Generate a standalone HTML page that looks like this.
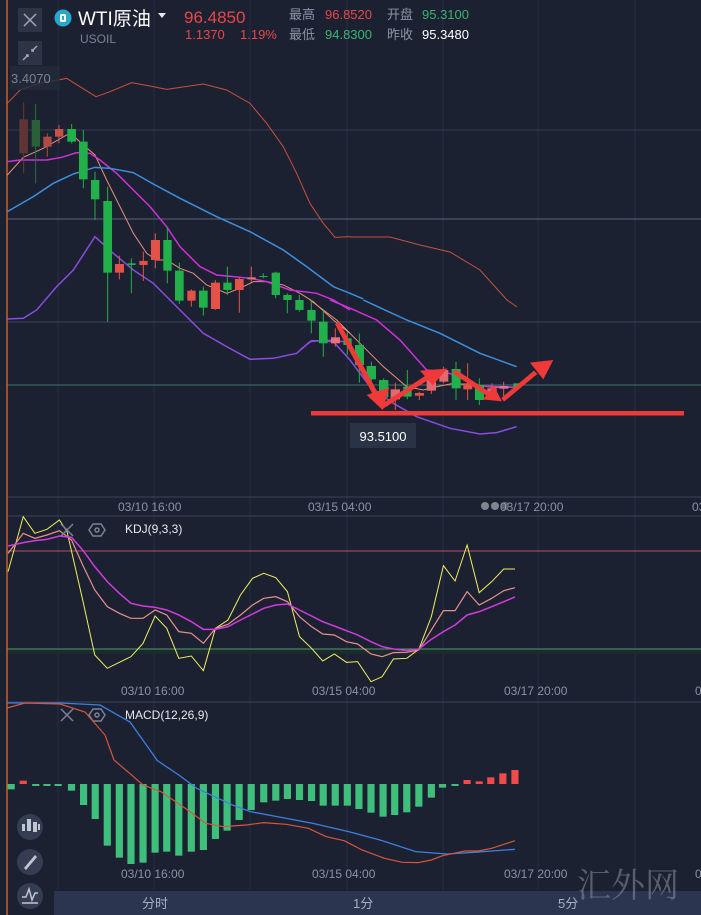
<!DOCTYPE html>
<html><head><meta charset="utf-8"><style>
html,body{margin:0;padding:0;background:#1b2131;}
body{width:701px;height:915px;overflow:hidden;position:relative;font-family:"Liberation Sans","Noto Sans CJK SC",sans-serif;}
svg{position:absolute;left:0;top:0}
.ns{vector-effect:non-scaling-stroke;fill:none}
</style></head><body>
<svg width="701" height="915" viewBox="0 0 701 915" xmlns="http://www.w3.org/2000/svg">
<rect width="701" height="915" fill="#1b2131"/>
<g stroke="#283046" stroke-width="1">
<line x1="58" y1="0" x2="58" y2="890"/><line x1="154" y1="0" x2="154" y2="890"/><line x1="250" y1="0" x2="250" y2="890"/><line x1="347" y1="0" x2="347" y2="890"/><line x1="443" y1="0" x2="443" y2="890"/><line x1="538" y1="0" x2="538" y2="890"/><line x1="635" y1="0" x2="635" y2="890"/>
</g>
<line x1="7" y1="130" x2="701" y2="130" stroke="#323a50"/>
<line x1="7" y1="219" x2="701" y2="219" stroke="#5a6278"/>
<line x1="7" y1="322" x2="701" y2="322" stroke="#3a4258"/>
<line x1="7" y1="385" x2="701" y2="385" stroke="#3f7468"/>
<line x1="7" y1="497" x2="701" y2="497" stroke="#3a4258"/>
<line x1="7" y1="516" x2="701" y2="516" stroke="#3a4258"/>
<line x1="7" y1="551" x2="701" y2="551" stroke="#b8506a"/>
<rect x="7" y="649" width="694" height="5" fill="#1c2a2c"/>
<line x1="7" y1="649" x2="701" y2="649" stroke="#4f9a6a"/>
<line x1="7" y1="702" x2="701" y2="702" stroke="#3a4258"/>
<line x1="7" y1="0" x2="7" y2="915" stroke="#c8602a" stroke-width="1.5"/>

<g transform="translate(0,80) scale(0.3333)">
<polyline class="ns" stroke="#c8503c" stroke-width="1" points="22,70 60,30 110,12 200,-5 240,20 288,50 330,35 395,8 450,18 500,28 610,12 680,30 750,70 800,130 850,200 890,280 930,370 970,430 1005,472 1050,470"/>
<polyline class="ns" stroke="#e8907a" stroke-width="1" points="22,285 70,232 130,205 200,165 215,163 250,195 285,225 320,300 360,380 400,460 440,520 470,540 500,540 540,565 580,580 620,615 680,640 720,625 760,605 800,605 850,615 900,640 940,665 1000,720 1050,760"/>
<polyline class="ns" stroke="#d030d8" stroke-width="1.5" points="22,245 60,240 140,240 185,232 230,218 270,220 300,240 350,280 400,330 450,380 500,440 540,500 600,560 650,585 700,590 750,595 800,605 870,630 950,640 1000,660 1050,690"/>
<polyline class="ns" stroke="#3d8fe0" stroke-width="1.5" points="22,395 100,350 160,310 220,282 285,262 330,265 400,278 460,312 540,355 650,410 750,455 850,510 920,560 1000,620 1050,640 1090,657"/>
<polyline class="ns" stroke="#8a4ce0" stroke-width="1.5" points="22,717 70,715 110,690 170,620 220,570 285,470 340,520 400,570 460,610 540,690 610,760 680,800 750,838 820,835 890,820 930,785 975,780 1030,785"/>
</g>
<polyline fill="none" stroke="#c8503c" points="350,237 390,237 420,245 450,252 480,270 507,300 517,307"/>
<g transform="translate(300,300) scale(0.3333)">
<polyline class="ns" stroke="#e8907a" stroke-width="1" points="30,0 110,60 180,130 250,200 320,260 370,270 420,258 460,250 520,255 580,262 650,262"/>
<polyline class="ns" stroke="#d030d8" stroke-width="1.5" points="90,0 140,20 230,60 300,120 380,210 430,215 480,230 540,258 600,260 650,262"/>
<polyline class="ns" stroke="#3d8fe0" stroke-width="1.5" points="190,0 320,60 420,100 540,160 650,200"/>
<polyline class="ns" stroke="#8a4ce0" stroke-width="1.5" points="0,150 35,122 100,125 150,180 210,260 280,310 350,350 450,385 540,402 590,398 650,380"/>
</g>

<g transform="translate(0,80) scale(0.3333)">
<line class="ns" x1="71" y1="68" x2="71" y2="280" stroke="#6b3a3a"/><rect x="58" y="118" width="26" height="102" fill="#5e3434"/>
<line class="ns" x1="107" y1="72" x2="107" y2="310" stroke="#2e6b3e"/><rect x="95" y="120" width="25" height="80" fill="#2a6038"/>
<line class="ns" x1="142" y1="160" x2="142" y2="230" stroke="#b04a44"/><rect x="130" y="170" width="25" height="30" fill="#b04a44"/>
<line class="ns" x1="177" y1="135" x2="177" y2="190" stroke="#c8504a"/><rect x="165" y="147" width="25" height="23" fill="#c8504a"/>
<line class="ns" x1="215" y1="132" x2="215" y2="190" stroke="#22b04a"/><rect x="202" y="147" width="26" height="38" fill="#22b04a"/>
<line class="ns" x1="250" y1="150" x2="250" y2="325" stroke="#22b04a"/><rect x="237" y="185" width="26" height="113" fill="#22b04a"/>
<line class="ns" x1="285" y1="275" x2="285" y2="420" stroke="#22b04a"/><rect x="273" y="300" width="25" height="58" fill="#22b04a"/>
<line class="ns" x1="323" y1="320" x2="323" y2="725" stroke="#22b04a"/><rect x="310" y="363" width="26" height="215" fill="#22b04a"/>
<line class="ns" x1="358" y1="527" x2="358" y2="598" stroke="#e4534a"/><rect x="345" y="552" width="27" height="26" fill="#e4534a"/>
<line class="ns" x1="394" y1="535" x2="394" y2="640" stroke="#22b04a"/><rect x="382" y="550" width="25" height="5" fill="#22b04a"/>
<line class="ns" x1="430" y1="515" x2="430" y2="603" stroke="#e4534a"/><rect x="418" y="543" width="25" height="12" fill="#e4534a"/>
<line class="ns" x1="466" y1="460" x2="466" y2="565" stroke="#e4534a"/><rect x="453" y="480" width="27" height="60" fill="#e4534a"/>
<line class="ns" x1="502" y1="440" x2="502" y2="610" stroke="#22b04a"/><rect x="490" y="480" width="25" height="92" fill="#22b04a"/>
<line class="ns" x1="538" y1="548" x2="538" y2="672" stroke="#22b04a"/><rect x="525" y="572" width="26" height="90" fill="#22b04a"/>
<line class="ns" x1="574" y1="628" x2="574" y2="680" stroke="#e4534a"/><rect x="562" y="632" width="25" height="30" fill="#e4534a"/>
<line class="ns" x1="610" y1="620" x2="610" y2="707" stroke="#22b04a"/><rect x="597" y="632" width="26" height="51" fill="#22b04a"/>
<line class="ns" x1="646" y1="600" x2="646" y2="690" stroke="#e4534a"/><rect x="633" y="608" width="27" height="79" fill="#e4534a"/>
<line class="ns" x1="682" y1="560" x2="682" y2="645" stroke="#22b04a"/><rect x="670" y="608" width="25" height="22" fill="#22b04a"/>
<line class="ns" x1="718" y1="590" x2="718" y2="698" stroke="#e4534a"/><rect x="705" y="597" width="26" height="33" fill="#e4534a"/>
<line class="ns" x1="754" y1="560" x2="754" y2="605" stroke="#e4534a"/><rect x="742" y="592" width="25" height="6" fill="#e87080"/>
<line class="ns" x1="790" y1="580" x2="790" y2="595" stroke="#22b04a"/><rect x="778" y="588" width="25" height="3" fill="#22b04a"/>
<line class="ns" x1="827" y1="575" x2="827" y2="655" stroke="#22b04a"/><rect x="815" y="578" width="25" height="67" fill="#22b04a"/>
<line class="ns" x1="862" y1="640" x2="862" y2="700" stroke="#22b04a"/><rect x="850" y="645" width="25" height="15" fill="#22b04a"/>
<line class="ns" x1="898" y1="645" x2="898" y2="695" stroke="#22b04a"/><rect x="886" y="660" width="25" height="30" fill="#22b04a"/>
<line class="ns" x1="934" y1="660" x2="934" y2="760" stroke="#22b04a"/><rect x="922" y="690" width="25" height="32" fill="#22b04a"/>
<line class="ns" x1="970" y1="690" x2="970" y2="830" stroke="#22b04a"/><rect x="957" y="725" width="26" height="65" fill="#22b04a"/>
<line class="ns" x1="1006" y1="745" x2="1006" y2="800" stroke="#e4534a"/><rect x="993" y="772" width="27" height="18" fill="#e87080"/>
</g>
<g transform="translate(300,300) scale(0.3333)">
<line class="ns" x1="142" y1="95" x2="142" y2="165" stroke="#22b04a"/><rect x="130" y="115" width="25" height="20" fill="#22b04a"/>
<line class="ns" x1="178" y1="100" x2="178" y2="248" stroke="#22b04a"/><rect x="165" y="135" width="27" height="60" fill="#22b04a"/>
<line class="ns" x1="214" y1="185" x2="214" y2="250" stroke="#22b04a"/><rect x="200" y="198" width="28" height="40" fill="#22b04a"/>
<line class="ns" x1="251" y1="235" x2="251" y2="325" stroke="#22b04a"/><rect x="237" y="240" width="28" height="52" fill="#22b04a"/>
<line class="ns" x1="286" y1="248" x2="286" y2="330" stroke="#e4534a"/><rect x="272" y="268" width="28" height="30" fill="#e06a70"/>
<line class="ns" x1="322" y1="210" x2="322" y2="298" stroke="#22b04a"/><rect x="310" y="260" width="25" height="30" fill="#22b04a"/>
<line class="ns" x1="358" y1="275" x2="358" y2="300" stroke="#e4534a"/><rect x="345" y="279" width="27" height="8" fill="#e4534a"/>
<line class="ns" x1="394" y1="220" x2="394" y2="282" stroke="#e4534a"/><rect x="380" y="240" width="28" height="32" fill="#e06a70"/>
<line class="ns" x1="431" y1="200" x2="431" y2="250" stroke="#e4534a"/><rect x="418" y="210" width="27" height="35" fill="#e06a70"/>
<line class="ns" x1="468" y1="185" x2="468" y2="300" stroke="#22b04a"/><rect x="455" y="207" width="27" height="58" fill="#22b04a"/>
<line class="ns" x1="503" y1="190" x2="503" y2="300" stroke="#e4534a"/><rect x="490" y="250" width="27" height="18" fill="#e4534a"/>
<line class="ns" x1="538" y1="235" x2="538" y2="315" stroke="#22b04a"/><rect x="525" y="255" width="27" height="45" fill="#22b04a"/>
<line class="ns" x1="576" y1="250" x2="576" y2="300" stroke="#e4534a"/><rect x="562" y="265" width="28" height="33" fill="#e06a70"/>
<line class="ns" x1="611" y1="245" x2="611" y2="295" stroke="#e4534a"/><rect x="598" y="258" width="27" height="8" fill="#e070a0"/>
<rect x="640" y="250" width="20" height="12" fill="#22b04a"/>
<g fill="#f03a3a" stroke="none">
<polygon points="105,72 118,66 240,290 226,297"/>
<polygon points="200,285 248,330 268,262"/>
<polygon points="246,328 240,315 380,225 388,238"/>
<polygon points="360,212 442,206 398,256"/>
<polygon points="458,220 466,208 572,278 564,290"/>
<polygon points="548,298 606,304 582,258"/>
<polygon points="612,305 604,294 702,212 712,222"/>
<polygon points="690,188 760,180 730,238"/>
</g>
</g>
<rect x="311" y="411" width="373" height="4.5" fill="#f03a3a"/>
<rect x="350" y="423" width="66" height="25" fill="#2a3246"/>
<text x="383" y="441" font-size="13" fill="#ffffff" text-anchor="middle">93.5100</text>

<g font-size="12" fill="#8a93a6">
<text x="118" y="511">03/10 16:00</text><text x="308" y="511">03/15 04:00</text><text x="500" y="511">03/17 20:00</text><text x="692" y="511">03</text>
<text x="121" y="695">03/10 16:00</text><text x="312" y="695">03/15 04:00</text><text x="504" y="695">03/17 20:00</text><text x="695" y="695">0</text>
<text x="121" y="878">03/10 16:00</text><text x="312" y="878">03/15 04:00</text><text x="504" y="878">03/17 20:00</text><text x="695" y="878">0</text>
</g>
<circle cx="485" cy="506" r="4" fill="#9aa0aa" opacity="0.8"/><circle cx="495" cy="506" r="4" fill="#9aa0aa" opacity="0.8"/><circle cx="505" cy="506" r="4" fill="#9aa0aa" opacity="0.5"/>

<g transform="translate(0,500) scale(0.447,0.3333)">
<polyline class="ns" stroke="#f0f060" stroke-width="1" points="18,215 52,50 78,100 105,88 133,60 150,95 185,300 212,465 240,505 293,470 320,430 347,348 373,385 400,475 428,468 455,512 482,385 510,360 538,285 565,235 590,220 617,233 643,275 670,410 697,445 722,483 748,462 775,487 800,485 830,545 855,530 880,477 910,475 937,448 965,350 992,197 1018,243 1045,135 1072,278 1100,245 1127,207 1152,207"/>
<polyline class="ns" stroke="#e89090" stroke-width="1.2" points="18,160 52,100 78,115 105,105 133,92 160,120 185,195 212,270 240,320 267,340 293,355 320,355 347,330 373,345 400,395 428,400 455,430 482,385 510,373 538,345 565,315 590,295 617,290 643,305 670,350 697,380 722,402 748,405 775,425 800,432 830,462 855,470 880,458 910,457 937,450 965,390 992,332 1018,332 1045,275 1072,315 1100,295 1127,272 1152,263"/>
<polyline class="ns" stroke="#d23be0" stroke-width="1.5" points="18,138 52,128 78,122 105,118 133,108 160,112 185,150 212,200 240,245 267,280 293,310 320,318 347,322 373,330 400,345 428,365 455,388 482,388 510,380 538,360 565,342 590,325 617,315 643,312 670,330 697,348 722,365 748,378 775,392 800,405 830,425 855,440 880,447 910,452 937,447 965,418 992,395 1018,375 1045,345 1072,335 1100,320 1127,305 1152,291"/>
</g>
<text x="125" y="533" font-size="12" fill="#e6e9ef">KDJ(9,3,3)</text>
<text x="125" y="719" font-size="12" fill="#e6e9ef">MACD(12,26,9)</text>
<g stroke="#7a8296" stroke-width="1.5" fill="none">
<path d="M61 524 L73 536 M73 524 L61 536"/><polygon points="93,524 101,524 105,530 101,536 93,536 89,530"/><circle cx="97" cy="530" r="2"/>
<path d="M61 709 L73 721 M73 709 L61 721"/><polygon points="93,709 101,709 105,715 101,721 93,721 89,715"/><circle cx="97" cy="715" r="2"/>
</g>

<g transform="translate(0,760) scale(0.447,0.3333)">
<g fill="#3ec07c">
<rect x="17" y="72" width="16" height="16"/><rect x="72" y="72" width="16" height="6"/><rect x="97" y="72" width="16" height="6"/><rect x="122" y="72" width="16" height="6"/>
<rect x="152" y="72" width="16" height="20"/><rect x="179" y="72" width="16" height="63"/><rect x="205" y="72" width="16" height="105"/><rect x="232" y="72" width="16" height="185"/><rect x="259" y="72" width="16" height="221"/><rect x="285" y="72" width="16" height="240"/><rect x="312" y="72" width="16" height="236"/><rect x="339" y="72" width="16" height="206"/><rect x="365" y="72" width="16" height="203"/><rect x="392" y="72" width="16" height="215"/><rect x="420" y="72" width="16" height="203"/><rect x="447" y="72" width="16" height="198"/><rect x="474" y="72" width="16" height="165"/><rect x="500" y="72" width="16" height="140"/><rect x="527" y="72" width="16" height="108"/><rect x="554" y="72" width="16" height="78"/><rect x="582" y="72" width="16" height="55"/><rect x="609" y="72" width="16" height="50"/><rect x="635" y="72" width="16" height="45"/><rect x="662" y="72" width="16" height="48"/><rect x="689" y="72" width="16" height="51"/><rect x="715" y="72" width="16" height="65"/><rect x="742" y="72" width="16" height="65"/><rect x="769" y="72" width="16" height="65"/><rect x="795" y="72" width="16" height="75"/><rect x="822" y="72" width="16" height="86"/><rect x="849" y="72" width="16" height="98"/><rect x="875" y="72" width="16" height="93"/><rect x="902" y="72" width="16" height="85"/><rect x="929" y="72" width="16" height="68"/><rect x="957" y="72" width="16" height="41"/><rect x="982" y="72" width="16" height="11"/><rect x="1010" y="72" width="16" height="6"/>
</g>
<g fill="#f04a4a">
<rect x="44" y="62" width="16" height="10"/><rect x="1037" y="60" width="16" height="12"/><rect x="1064" y="64" width="16" height="8"/><rect x="1090" y="52" width="16" height="20"/><rect x="1117" y="40" width="16" height="32"/><rect x="1144" y="30" width="16" height="42"/>
</g>
<polyline class="ns" stroke="#3d7fe0" stroke-width="1.3" points="350,0 400,45 440,85 480,110 520,135 560,155 620,170 700,190 780,215 850,240 930,275 1000,282 1060,277 1100,273 1152,268"/>
<polyline class="ns" stroke="#d8543c" stroke-width="1.2" points="255,0 290,40 320,75 360,95 420,150 460,190 500,200 550,195 590,188 640,193 690,205 730,230 770,242 810,270 860,295 900,307 935,308 965,300 990,287 1040,273 1070,273 1100,265 1152,242"/>
</g>
<polyline fill="none" stroke="#3d7fe0" stroke-width="1.3" points="7,703 60,703 100,705 130,722 157,760"/>
<polyline fill="none" stroke="#d8543c" stroke-width="1.2" points="7,708 25,703 60,704 85,712 105,735 114,760"/>

<g fill="#353d52"><circle cx="30" cy="827" r="13"/><circle cx="30" cy="862" r="13"/><circle cx="30" cy="896" r="13"/></g>
<g fill="#c0c6d2"><rect x="22" y="824" width="3" height="7"/><rect x="27" y="819" width="4" height="12"/><rect x="33" y="822" width="4" height="10"/><rect x="38" y="824" width="2" height="6"/></g>
<path d="M24 868 L35 855 L37 857 L26 870 Z" fill="#c0c6d2"/>
<path d="M22 897 L26 897 L29 889 L32 900 L35 893 L38 893" stroke="#c0c6d2" stroke-width="1.5" fill="none"/><line x1="22" y1="903" x2="38" y2="903" stroke="#c0c6d2" stroke-width="1.5"/>

<rect x="54" y="891" width="647" height="24" fill="#2b3550"/>
<g font-size="13" fill="#a8b0c0"><text x="142" y="908">分时</text><text x="353" y="908">1分</text><text x="558" y="908">5分</text></g>
<text x="577" y="897" font-size="34" fill="#8a909c" opacity="0.55" font-family="'Noto Serif CJK SC',serif">汇外网</text>

<rect x="18" y="8" width="24" height="24" fill="#2c3446"/>
<path d="M24 14 L36 26 M36 14 L24 26" stroke="#a0a8b8" stroke-width="1.5"/>
<rect x="18" y="41" width="24" height="24" fill="#2c3446"/>
<path d="M23 60 L28 55 M26 55 L28 55 L28 57 M37 46 L32 51 M32 49 L32 51 L34 51" stroke="#a0a8b8" stroke-width="1.5" fill="none"/>
<rect x="10" y="66" width="50" height="24" fill="#232a3b" opacity="0.8"/>
<text x="11" y="83" font-size="13" fill="#7a8294">3.4070</text>
<circle cx="63" cy="18" r="8.5" fill="#2aa6d0"/><rect x="60" y="14" width="6" height="8" rx="1.5" fill="#fff"/><rect x="62" y="16" width="2" height="4" fill="#2aa6d0"/>
<text x="78" y="25" font-size="19" fill="#ffffff">WTI原油</text>
<path d="M158 13 L166 13 L162 18 Z" fill="#e6e9ef"/>
<text x="80" y="43" font-size="12" fill="#7a8294">USOIL</text>
<text x="184" y="23" font-size="17" fill="#e8474a">96.4850</text>
<text x="185" y="39" font-size="13" fill="#e8474a">1.1370</text><text x="240" y="39" font-size="13" fill="#e8474a">1.19%</text>
<g font-size="13">
<text x="289" y="19" fill="#8a93a6">最高</text><text x="325" y="19" fill="#e8474a">96.8520</text>
<text x="387" y="19" fill="#8a93a6">开盘</text><text x="422" y="19" fill="#3cb371">95.3100</text>
<text x="289" y="39" fill="#8a93a6">最低</text><text x="325" y="39" fill="#3cb371">94.8300</text>
<text x="387" y="39" fill="#8a93a6">昨收</text><text x="422" y="39" fill="#ffffff">95.3480</text>
</g>
</svg>
</body></html>
